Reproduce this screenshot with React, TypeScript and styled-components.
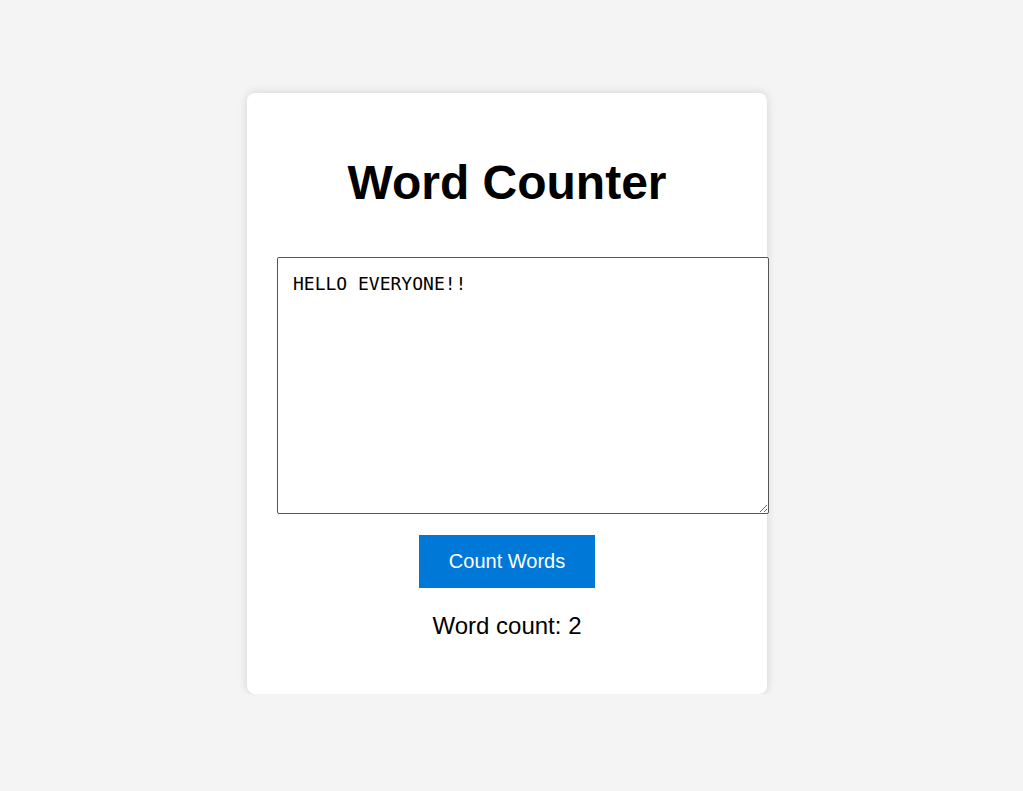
import React, { useState } from "react";
import styled, { createGlobalStyle } from "styled-components";

const GlobalStyle = createGlobalStyle`
  html, body {
    margin: 0;
    padding: 0;
    background: #f4f4f4;
    font-family: "Liberation Sans", Arial, sans-serif;
  }
`;

const Page = styled.div`
  display: flex;
  justify-content: center;
  align-items: flex-start;
  padding: 93px 9px 0 0;
`;

const Card = styled.div`
  width: 460px;
  padding: 30px;
  background: #ffffff;
  border-radius: 8px;
  box-shadow: 0 0 10px rgba(0, 0, 0, 0.14);
  display: flex;
  flex-direction: column;
  align-items: flex-start;
`;

const Title = styled.h1`
  align-self: stretch;
  margin: 32px 0 47px;
  font-size: 48px;
  font-weight: bold;
  text-align: center;
  color: #000;
`;

const TextArea = styled.textarea`
  display: block;
  width: 100%;
  height: 225px;
  margin: 0;
  padding: 15px;
  font-family: "DejaVu Sans Mono", monospace;
  font-size: 18px;
  border: 1px solid #555555;
  border-radius: 2px;
  color: #000;
`;

const Button = styled.button`
  align-self: center;
  margin-top: 21px;
  padding: 15px 30px;
  border: none;
  background: #0078d7;
  color: #ffffff;
  font-family: "Liberation Sans", Arial, sans-serif;
  font-size: 20px;
  line-height: 23px;
  cursor: pointer;
`;

const Result = styled.p`
  align-self: stretch;
  margin: 24px 0 24px;
  font-size: 24px;
  text-align: center;
  color: #000;
`;

export default function App() {
  const [text, setText] = useState("HELLO EVERYONE!!");
  const [count, setCount] = useState(2);
  return (
    <>
      <GlobalStyle />
      <Page>
        <Card>
          <Title>Word Counter</Title>
          <TextArea value={text} onChange={(e) => setText(e.target.value)} />
          <Button
            onClick={() =>
              setCount(text.trim() ? text.trim().split(/\s+/).length : 0)
            }
          >
            Count Words
          </Button>
          <Result>Word count: {count}</Result>
        </Card>
      </Page>
    </>
  );
}
